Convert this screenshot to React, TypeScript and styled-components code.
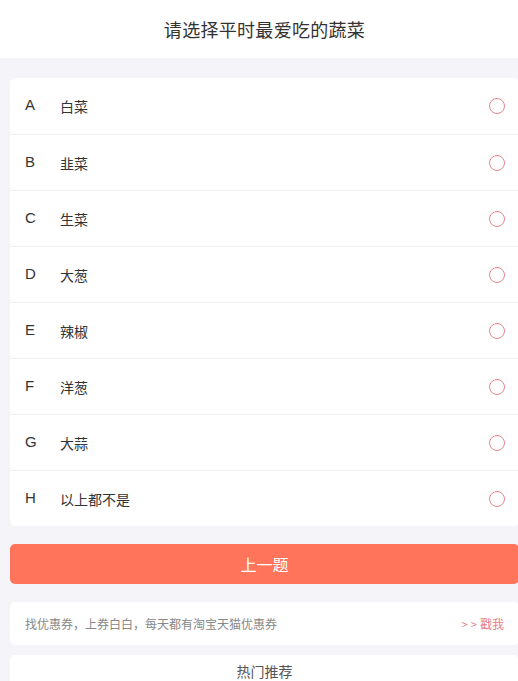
import React from 'react'
import styled, { createGlobalStyle } from 'styled-components'

const GlobalStyle = createGlobalStyle`
  html, body {
    margin: 0;
    padding: 0;
    background: #f5f5f9;
    overflow: hidden;
  }
  body {
    font-family: "Noto Sans CJK SC", "Liberation Sans", sans-serif;
  }
  * {
    box-sizing: border-box;
  }
`

const Page = styled.div`
  width: 529px;
  min-height: 681px;
  background: #f5f5f9;
`

const Header = styled.header`
  height: 58px;
  background: #fff;
  display: flex;
  align-items: center;
  justify-content: center;
  font-size: 18px;
  color: #333;
  letter-spacing: 0.3px;
`

const Body = styled.main`
  padding: 20px 10px 0;
  display: flex;
  flex-direction: column;
`

const OptionList = styled.ul`
  list-style: none;
  margin: 0;
  padding: 0;
  background: #fff;
  border-radius: 5px;
  overflow: hidden;
`

const OptionRow = styled.li`
  height: 56px;
  display: flex;
  align-items: center;
  padding: 0 14px 0 15px;
  font-size: 14px;
  color: #333;
  & + & {
    border-top: 1px solid #f0f0f2;
  }
`

const Letter = styled.span`
  width: 35px;
  font-family: "Liberation Sans", sans-serif;
  font-size: 15px;
  color: #333;
  margin-top: -3px;
`

const Label = styled.span`
  flex: 1;
`

const Radio = styled.span`
  width: 16px;
  height: 16px;
  border: 1px solid #e8848c;
  border-radius: 50%;
`

const PrevButton = styled.button`
  margin-top: 18px;
  height: 40px;
  border: none;
  border-radius: 5px;
  background: #ff745a;
  color: #fff;
  font-family: inherit;
  font-size: 16px;
  cursor: pointer;
`

const CouponBar = styled.div`
  margin-top: 18px;
  height: 43px;
  background: #fff;
  border-radius: 5px;
  display: flex;
  align-items: center;
  justify-content: space-between;
  padding: 0 15px 0 15px;
  font-size: 12px;
  color: #888;
`

const PokeLink = styled.a`
  color: #e87c84;
  text-decoration: none;
  font-size: 12px;
`

const Arrows = styled.span`
  letter-spacing: 3px;
  font-size: 11px;
`

const Section = styled.section`
  margin-top: 10px;
  background: #fff;
  border-radius: 5px 5px 0 0;
  height: 60px;
  display: flex;
  justify-content: center;
  padding-top: 6px;
  font-size: 14px;
  line-height: 20px;
  color: #555;
`

const options = [
  { key: 'A', label: '白菜' },
  { key: 'B', label: '韭菜' },
  { key: 'C', label: '生菜' },
  { key: 'D', label: '大葱' },
  { key: 'E', label: '辣椒' },
  { key: 'F', label: '洋葱' },
  { key: 'G', label: '大蒜' },
  { key: 'H', label: '以上都不是' },
]

const App: React.FC = () => {
  return (
    <>
      <GlobalStyle />
      <Page>
        <Header>请选择平时最爱吃的蔬菜</Header>
        <Body>
          <OptionList>
            {options.map((o) => (
              <OptionRow key={o.key}>
                <Letter>{o.key}</Letter>
                <Label>{o.label}</Label>
                <Radio />
              </OptionRow>
            ))}
          </OptionList>
          <PrevButton>上一题</PrevButton>
          <CouponBar>
            <span>找优惠券，上券白白，每天都有淘宝天猫优惠券</span>
            <PokeLink href="#">
              <Arrows>&gt;&gt;</Arrows>戳我
            </PokeLink>
          </CouponBar>
          <Section>热门推荐</Section>
        </Body>
      </Page>
    </>
  )
}

export default App
